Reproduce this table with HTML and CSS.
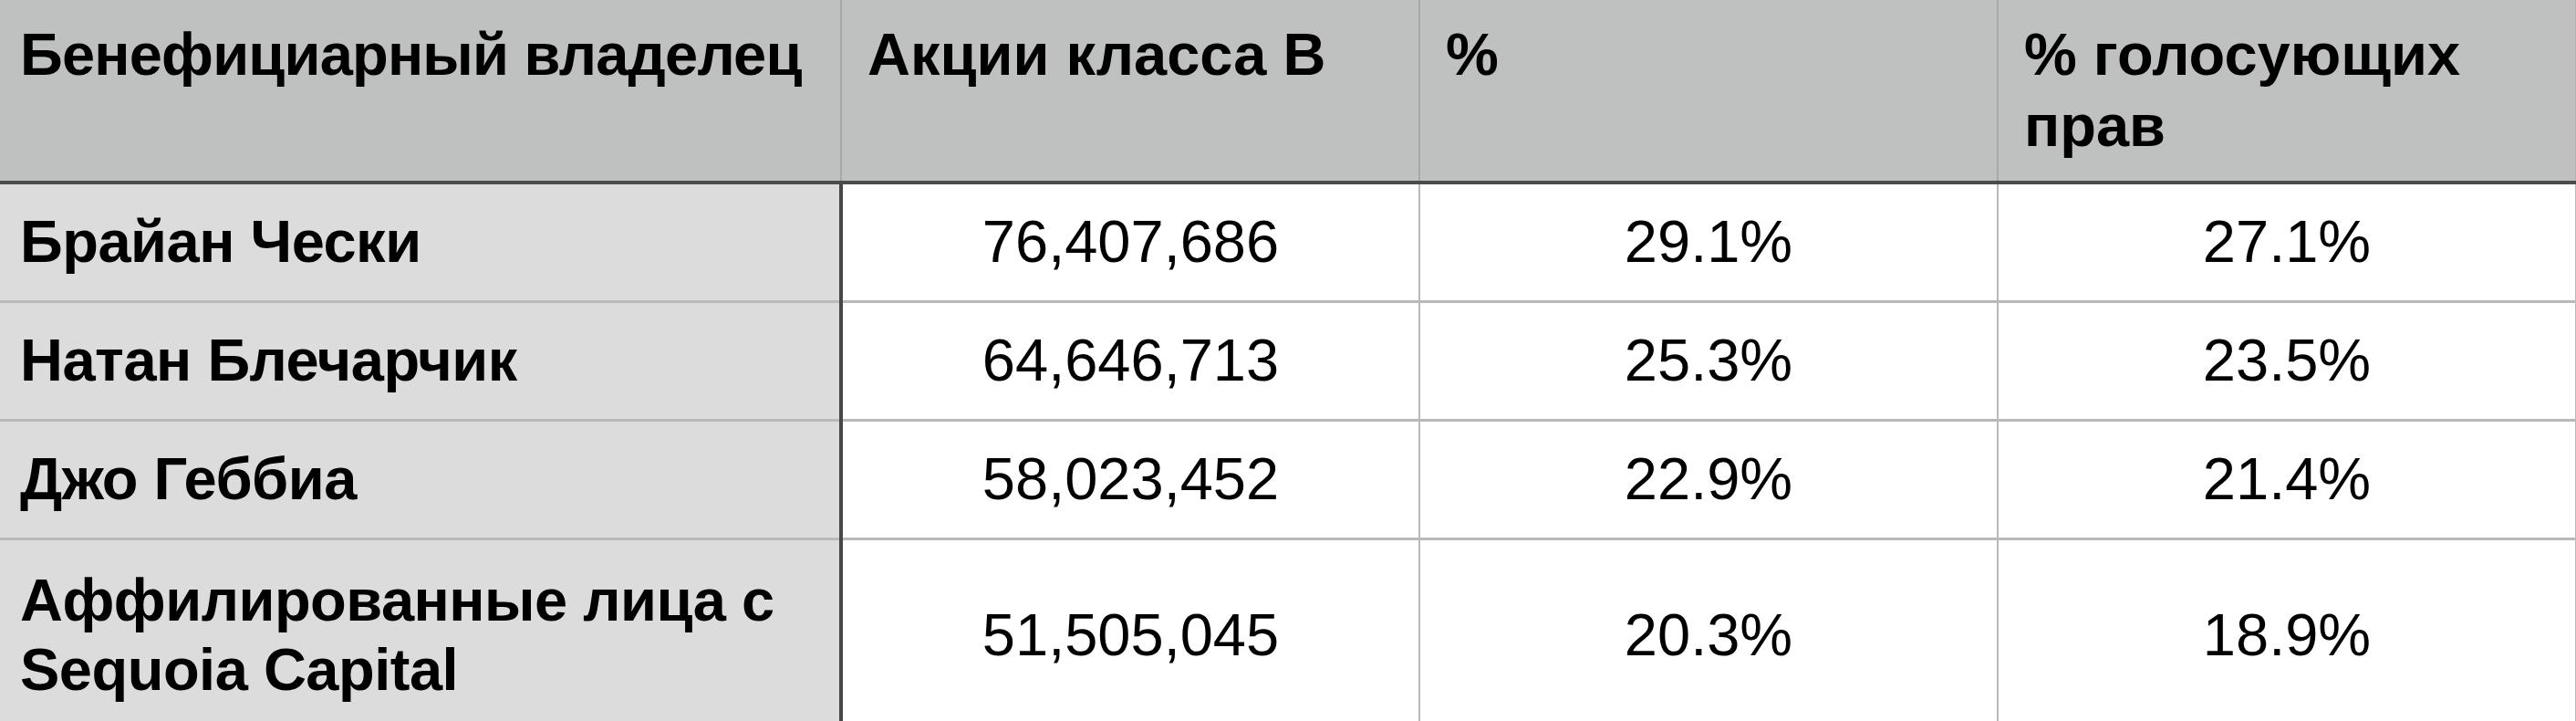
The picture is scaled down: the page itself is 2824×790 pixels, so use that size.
FILE: index.html
```html
<!DOCTYPE html>
<html lang="ru">
<head>
<meta charset="utf-8">
<title>Бенефициарные владельцы</title>
<link rel="stylesheet" href="styles.css">
</head>
<body>
<table class="owners">
  <colgroup>
    <col class="c-name">
    <col class="c-num">
    <col class="c-num">
    <col class="c-num">
  </colgroup>
  <thead>
    <tr class="head-row">
      <th class="h-name">Бенефициарный владелец</th>
      <th>Акции класса B</th>
      <th>%</th>
      <th class="h-last">% голосующих прав</th>
    </tr>
  </thead>
  <tbody>
    <tr class="row">
      <td class="name">Брайан Чески</td>
      <td>76,407,686</td>
      <td>29.1%</td>
      <td class="last">27.1%</td>
    </tr>
    <tr class="row">
      <td class="name">Натан Блечарчик</td>
      <td>64,646,713</td>
      <td>25.3%</td>
      <td class="last">23.5%</td>
    </tr>
    <tr class="row">
      <td class="name">Джо Геббиа</td>
      <td>58,023,452</td>
      <td>22.9%</td>
      <td class="last">21.4%</td>
    </tr>
    <tr class="row row-tall">
      <td class="name">Аффилированные лица с Sequoia Capital</td>
      <td>51,505,045</td>
      <td>20.3%</td>
      <td class="last">18.9%</td>
    </tr>
  </tbody>
</table>
</body>
</html>
```
FILE: styles.css
```css
html, body {
  margin: 0;
  padding: 0;
  background: #ffffff;
}

body {
  font-family: "Liberation Sans", Arial, Helvetica, sans-serif;
  color: #000000;
}

.owners {
  width: 2824px;
  table-layout: fixed;
  border-collapse: collapse;
  font-size: 65px;
  line-height: 76px;
}

.c-name { width: 922px; }
.c-num { width: 634px; }

.head-row { height: 200px; }

.owners th {
  background: #bfc1c0;
  font-weight: bold;
  text-align: left;
  vertical-align: top;
  line-height: 78px;
  padding: 21px 26px 0 28px;
  border-right: 2px solid #a8aaa9;
  border-bottom: 4px solid #4b4b4b;
}

.owners th.h-name {
  padding-left: 22px;
  padding-right: 0;
  white-space: nowrap;
  letter-spacing: -0.8px;
}

.owners th.h-last {
  border-right: 2px solid #b3b3b3;
}

.row { height: 130px; }
.row-tall { height: 212px; }

.owners td {
  text-align: center;
  vertical-align: middle;
  padding: 0 20px;
  border-right: 2px solid #b9b9b9;
  border-bottom: 3px solid #b9b9b9;
}

.owners td.name {
  background: #dcdcdc;
  font-weight: bold;
  text-align: left;
  padding-left: 22px;
  letter-spacing: -0.5px;
  border-right: 4px solid #474747;
}

.owners td.last {
  border-right: 2px solid #b9b9b9;
}
```
